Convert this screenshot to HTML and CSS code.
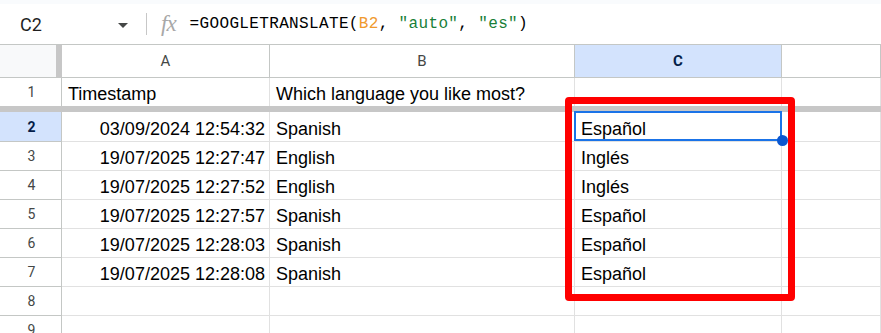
FILE: index.html
```html
<!DOCTYPE html>
<html>
  <head>
    <title>Sheet</title>
    <meta charset="UTF-8" />
    <link rel="stylesheet" href="styles.css">
  </head>

  <body>
    <div class="top-band"></div>

    <div class="formula-bar">
      <div class="name-box">
        <span class="cell-ref">C2</span>
        <span class="caret"></span>
      </div>
      <div class="bar-sep"></div>
      <span class="fx">fx</span>
      <div class="formula">=GOOGLETRANSLATE(<span class="ref">B2</span>, <span class="str">"auto"</span>, <span class="str">"es"</span>)</div>
    </div>

    <div class="sheet">
      <div class="grid">
        <div class="corner"></div>
        <div class="col-head">A</div>
        <div class="col-head">B</div>
        <div class="col-head active">C</div>
        <div class="col-head"></div>

        <div class="row-head first">1</div>
        <div class="cell first">Timestamp</div>
        <div class="cell first">Which language you like most?</div>
        <div class="cell first"></div>
        <div class="cell first"></div>
      </div>

      <div class="freeze-bar"></div>

      <div class="grid body">
        <div class="row-head active tall">2</div>
        <div class="cell num tall">03/09/2024 12:54:32</div>
        <div class="cell tall">Spanish</div>
        <div class="cell tall selected">Español<span class="handle"></span></div>
        <div class="cell tall"></div>

        <div class="row-head">3</div>
        <div class="cell num">19/07/2025 12:27:47</div>
        <div class="cell">English</div>
        <div class="cell">Inglés</div>
        <div class="cell"></div>

        <div class="row-head">4</div>
        <div class="cell num">19/07/2025 12:27:52</div>
        <div class="cell">English</div>
        <div class="cell">Inglés</div>
        <div class="cell"></div>

        <div class="row-head">5</div>
        <div class="cell num">19/07/2025 12:27:57</div>
        <div class="cell">Spanish</div>
        <div class="cell">Español</div>
        <div class="cell"></div>

        <div class="row-head">6</div>
        <div class="cell num">19/07/2025 12:28:03</div>
        <div class="cell">Spanish</div>
        <div class="cell">Español</div>
        <div class="cell"></div>

        <div class="row-head">7</div>
        <div class="cell num">19/07/2025 12:28:08</div>
        <div class="cell">Spanish</div>
        <div class="cell">Español</div>
        <div class="cell"></div>

        <div class="row-head">8</div>
        <div class="cell"></div>
        <div class="cell"></div>
        <div class="cell"></div>
        <div class="cell"></div>

        <div class="row-head">9</div>
        <div class="cell"></div>
        <div class="cell"></div>
        <div class="cell"></div>
        <div class="cell"></div>
      </div>

      <!-- highlight box drawn over column C -->
      <div class="callout"></div>
    </div>
  </body>
</html>
```

FILE: styles.css
```css
body {
  margin: 0;
  background: #fff;
  font-family: "Liberation Sans", Arial, sans-serif;
  color: #000;
  overflow: hidden;
}

.top-band {
  height: 4px;
  background: #f9fbfd;
}

.formula-bar {
  height: 40px;
  display: flex;
  align-items: center;
  border-bottom: 1px solid #c4c7c5;
}

.name-box {
  width: 146px;
  display: flex;
  align-items: center;
  justify-content: space-between;
  padding-left: 20px;
  padding-right: 18px;
  box-sizing: border-box;
}

.cell-ref {
  font-family: Roboto, "Liberation Sans", sans-serif;
  font-size: 18px;
  color: #1f1f1f;
}

.caret {
  width: 0;
  height: 0;
  border-left: 5px solid transparent;
  border-right: 5px solid transparent;
  border-top: 5px solid #444746;
  margin-top: 2px;
}

.bar-sep {
  width: 1px;
  height: 22px;
  background: #c7c7c7;
}

.fx {
  font-family: "Liberation Serif", serif;
  font-style: italic;
  font-size: 23px;
  color: #a8a8a8;
  margin-left: 14px;
  margin-right: 14px;
  letter-spacing: -1px;
}

.formula {
  font-family: "Liberation Mono", monospace;
  font-size: 16px;
  color: #000;
  letter-spacing: 0.35px;
}

.formula .ref {
  color: #f09a2e;
}

.formula .str {
  color: #188038;
}

.sheet {
  position: relative;
}

.grid {
  display: grid;
  grid-template-columns: 62px 208px 305px 207px 1fr;
}

.corner {
  height: 32px;
  background: #f8f9fa;
  border-right: 6px solid #c7c7c7;
  border-bottom: 1px solid #c4c7c5;
  box-sizing: content-box;
  width: 56px;
}

.col-head {
  height: 32px;
  display: flex;
  align-items: center;
  justify-content: center;
  font-family: Roboto, "Liberation Sans", sans-serif;
  font-size: 15px;
  color: #444746;
  border-right: 1px solid #c4c7c5;
  border-bottom: 1px solid #c4c7c5;
}

.col-head.active {
  background: #d3e3fd;
  color: #041e49;
  font-weight: bold;
}

.row-head {
  height: 29px;
  box-sizing: border-box;
  display: flex;
  align-items: center;
  justify-content: center;
  padding-left: 2px;
  font-family: Roboto, "Liberation Sans", sans-serif;
  font-size: 14px;
  color: #444746;
  border-right: 1px solid #c4c7c5;
  border-bottom: 1px solid #c4c7c5;
}

.row-head.active {
  background: #d3e3fd;
  color: #041e49;
  font-weight: bold;
}

.cell {
  height: 29px;
  box-sizing: border-box;
  display: flex;
  align-items: flex-end;
  padding: 0 6px 1px 6px;
  font-size: 18px;
  white-space: nowrap;
  border-right: 1px solid #e1e1e1;
  border-bottom: 1px solid #e1e1e1;
}

.cell.num {
  justify-content: flex-end;
  padding-right: 4px;
}

.row-head.first,
.cell.first {
  height: 28px;
  border-bottom: none;
}

.row-head.tall,
.cell.tall {
  height: 30px;
}

.freeze-bar {
  height: 6px;
  background: #c7c7c7;
}

.cell.selected {
  position: relative;
}

.cell.selected::after {
  content: "";
  position: absolute;
  left: -1px;
  top: -1px;
  right: -1px;
  bottom: 0;
  border: 2px solid #1a73e8;
}

.handle {
  position: absolute;
  right: -7px;
  bottom: -5px;
  width: 11px;
  height: 11px;
  border-radius: 50%;
  background: #0b57d0;
  z-index: 2;
}

.callout {
  position: absolute;
  left: 565px;
  top: 52px;
  width: 216px;
  height: 190px;
  border: 7px solid #ff0000;
  border-radius: 4px;
  z-index: 3;
}
```
